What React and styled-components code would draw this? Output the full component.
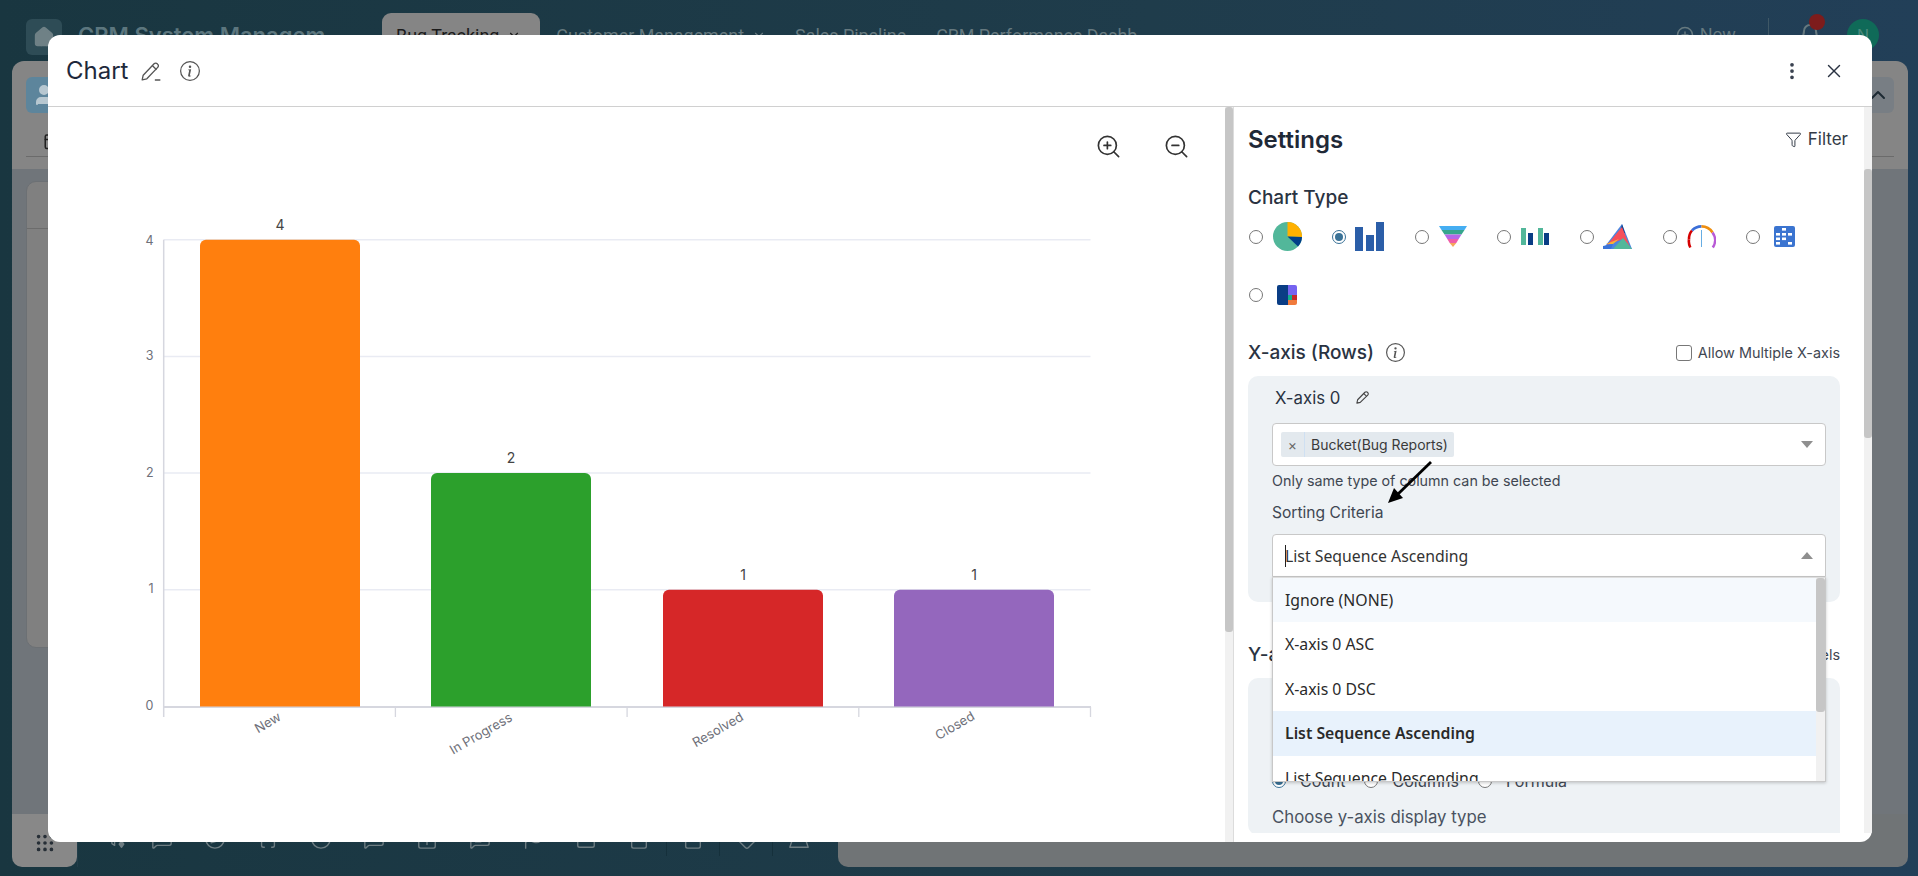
import React from "react";
import styled, { createGlobalStyle } from "styled-components";
import {
  ZoomIn, ZoomOut, Filter, X, Home, User, Calendar, ChevronUp, ChevronDown, CirclePlus, Bell, Grip,
  MessageSquare, Compass, Braces, Clock, MessageSquareDot, Calendar1, MessageSquareText, Flag, Rows2, ClipboardMinus, Tag, Mountain,
} from "lucide-react";
import { BsInfoCircle, BsThreeDotsVertical } from "react-icons/bs";

const Global = createGlobalStyle`
  html, body { margin: 0; padding: 0; height: 100%; background: #1c3a46; }
  * { box-sizing: border-box; }
  body { font-family: Inter, "Liberation Sans", sans-serif; }
`;

const Page = styled.div`
  position: relative;
  width: 1918px;
  height: 876px;
  overflow: hidden;
  display: flex;
  flex-direction: column;
  padding-bottom: 9px;
  background: linear-gradient(90deg, #193640 0%, #1f3c4b 60%, #223f58 100%);
`;

/* ---------- dimmed page behind the dialog ---------- */
const TopBar = styled.header`
  height: 61px;
  flex: none;
  display: flex;
  align-items: flex-start;
  padding: 13px 39px 0 26px;
  overflow: hidden;
`;
const HomeButton = styled.div`
  width: 36px;
  height: 36px;
  margin-top: 6px;
  flex: none;
  border-radius: 6px;
  background: #2e4c56;
  color: #6f8186;
  display: flex;
  align-items: center;
  justify-content: center;
`;
const AppTitle = styled.div`
  width: 320px;
  flex: none;
  padding: 8px 0 0 16px;
  font-size: 22px;
  font-weight: 600;
  line-height: 28px;
  color: #5c767e;
  white-space: nowrap;
  overflow: hidden;
`;
const Tab = styled.div`
  height: 44px;
  flex: none;
  display: flex;
  align-items: center;
  gap: 8px;
  padding: 0 ${(p) => (p.$active ? 19 : 14)}px 0 14px;
  margin-right: ${(p) => p.$gap || 0}px;
  border-radius: 9px;
  font-family: Roboto, sans-serif;
  font-size: 17.9px;
  color: ${(p) => (p.$active ? "#1b1b1b" : "#66797f")};
  background: ${(p) => (p.$active ? "#858585" : "transparent")};
  white-space: nowrap;
`;
const TopActions = styled.div`
  margin-left: auto;
  height: 44px;
  display: flex;
  align-items: center;
  color: #66797f;
  font-size: 17px;
`;
const NewButton = styled.div`
  display: flex;
  align-items: center;
  gap: 6px;
  padding-right: 32px;
`;
const BarDivider = styled.div`
  width: 1px;
  height: 34px;
  background: #3f5866;
  margin-right: 29px;
`;
const BellWrap = styled.div`
  position: relative;
  width: 24px;
  height: 24px;
  margin-right: 25px;
`;
const BellDot = styled.span`
  position: absolute;
  top: -9px;
  right: -3px;
  width: 16px;
  height: 16px;
  border-radius: 50%;
  background: #7d1c1c;
`;
const Avatar = styled.div`
  width: 32px;
  height: 32px;
  border-radius: 50%;
  background: #0f6a58;
  color: #4d8a7d;
  display: flex;
  align-items: center;
  justify-content: center;
  font-size: 16px;
`;
const Panel = styled.main`
  flex: 1;
  margin: 0 10px 0 12px;
  display: flex;
  flex-direction: column;
  min-height: 0;
`;
const PanelHead = styled.div`
  height: 108px;
  flex: none;
  padding: 16px 14px 0;
  background: #858585;
  border-radius: 12px 12px 0 0;
`;
const HeadRow = styled.div`
  height: 36px;
  display: flex;
  justify-content: space-between;
`;
const AppBadge = styled.div`
  width: 50px;
  height: 36px;
  border-radius: 6px;
  background: #5d859c;
  color: #b7c7d0;
  display: flex;
  align-items: center;
  padding-left: 6px;
`;
const CollapseButton = styled.div`
  width: 60px;
  height: 36px;
  border-radius: 6px;
  background: #787e84;
  color: #1d2a33;
  display: flex;
  align-items: center;
  justify-content: flex-end;
  padding-right: 4px;
`;
const ToolRow = styled.div`
  height: 32px;
  margin-top: 12px;
  padding-left: 17px;
  border-bottom: 1px solid #6b6b6b;
  color: #202020;
  display: flex;
  align-items: center;
`;
const PanelBody = styled.div`
  flex: 1;
  background: #70757a;
  padding: 12px 14px;
`;
const DimCard = styled.div`
  width: 1000px;
  height: 467px;
  background: #808080;
  border: 1px solid #6c7074;
  border-radius: 10px;
`;
const DimCardHead = styled.div`
  height: 47px;
  border-bottom: 1px solid #6c6c6c;
`;
const Dock = styled.div`
  height: 53px;
  flex: none;
  margin: 0 10px 0 12px;
  display: flex;
  align-items: stretch;
`;
const DockGrid = styled.div`
  width: 65px;
  flex: none;
  background: #888888;
  border-radius: 0 0 10px 10px;
  color: #262e36;
  display: flex;
  align-items: center;
  justify-content: center;
  padding-top: 5px;
`;
const DockStrip = styled.div`
  width: 761px;
  flex: none;
  display: flex;
  align-items: flex-start;
  padding: 8px 0 0 18.5px;
  border-left: 1px solid #223d49;
`;
const DockCell = styled.div`
  width: ${(p) => p.$w || 53}px;
  height: 34px;
  flex: none;
  color: #6e7d82;
  display: flex;
  align-items: center;
  justify-content: center;
  border-left: ${(p) => (p.$divider ? "1px solid #15303b" : "none")};
`;
const DockFill = styled.div`
  flex: 1;
  background: #707476;
  border-radius: 0 0 10px 10px;
`;

/* ---------- dialog ---------- */
const Modal = styled.section`
  position: absolute;
  left: 48px;
  top: 35px;
  width: 1824px;
  height: 807px;
  background: #fff;
  border-radius: 12px;
  overflow: hidden;
  display: flex;
  flex-direction: column;
`;
const ModalHeader = styled.div`
  height: 72px;
  flex: none;
  display: flex;
  align-items: center;
  padding: 0 27px 0 18px;
  border-bottom: 1.5px solid #d0d0d0;
`;
const ModalTitle = styled.h1`
  margin: 0 12px 0 0;
  font-size: 24px;
  font-weight: 400;
  color: #1e293b;
`;
const IconButton = styled.span`
  display: inline-flex;
  align-items: center;
  justify-content: center;
  color: ${(p) => p.$color || "#555"};
  margin-left: ${(p) => p.$ml || 0}px;
`;
const HeaderEnd = styled.div`
  margin-left: auto;
  display: flex;
  align-items: center;
  gap: 21px;
`;
const ModalBody = styled.div`
  flex: 1;
  display: flex;
  min-height: 0;
`;
const ChartColumn = styled.div`
  flex: 1;
  min-width: 0;
  display: flex;
  flex-direction: column;
`;
const ChartTools = styled.div`
  height: 78px;
  flex: none;
  display: flex;
  justify-content: flex-end;
  gap: 41px;
  padding: 25.5px 34.5px 0 0;
  color: #333;
`;
const ChartSvg = styled.svg`
  display: block;
  width: 1177px;
  height: 657px;
`;
const ScrollTrack = styled.div`
  width: ${(p) => p.$w || 8}px;
  flex: none;
  height: ${(p) => p.$h || "100%"};
  background: #f1f1f1;
  padding-top: ${(p) => p.$top || 0}px;
`;
const ScrollThumb = styled.div`
  height: ${(p) => p.$h}px;
  background: #c6c6c6;
  border-radius: 3px;
`;
const SplitEdge = styled.div`
  width: 1px;
  flex: none;
  background: #dcdcdc;
`;
const Settings = styled.div`
  position: relative;
  width: 630px;
  height: 726px;
  flex: none;
  padding: 0 24px 0 14px;
  overflow: hidden;
`;
const SettingsHead = styled.div`
  height: 64px;
  display: flex;
  align-items: center;
  justify-content: space-between;
`;
const SettingsTitle = styled.h2`
  margin: 0;
  font-size: 24px;
  font-weight: 600;
  color: #1f2937;
`;
const FilterLink = styled.div`
  display: flex;
  align-items: center;
  gap: 6px;
  margin-right: -8px;
  font-size: 17px;
  color: #333b47;
`;
const SectionTitle = styled.h3`
  margin: ${(p) => p.$mt || 0}px 0 0;
  height: 26px;
  line-height: 26px;
  font-size: 19px;
  font-weight: 500;
  color: #2a3342;
  display: flex;
  align-items: center;
  gap: 12px;
  white-space: nowrap;
`;
const TypeGrid = styled.div`
  display: flex;
  flex-wrap: wrap;
  margin-top: -3.5px;
`;
const TypeItem = styled.div`
  width: 82.8px;
  height: 58px;
  display: flex;
  align-items: center;
  gap: ${(p) => p.$gap}px;
  padding-left: 1px;
`;
const Radio = styled.span`
  width: 14px;
  height: 14px;
  flex: none;
  border-radius: 50%;
  border: 1.5px solid ${(p) => (p.$on ? "#3a7297" : "#777")};
  background: #fff;
  display: inline-flex;
  align-items: center;
  justify-content: center;
  &::after {
    content: "";
    width: 8px;
    height: 8px;
    border-radius: 50%;
    background: ${(p) => (p.$on ? "#3a7297" : "transparent")};
  }
`;
const SectionRow = styled.div`
  height: 26px;
  margin-top: ${(p) => p.$mt || 0}px;
  display: flex;
  align-items: center;
  justify-content: space-between;
`;
const CheckLabel = styled.label`
  display: flex;
  align-items: center;
  gap: 6px;
  font-size: 14.4px;
  color: #3f4752;
  white-space: nowrap;
`;
const CheckBox = styled.span`
  width: 16px;
  height: 16px;
  border: 1.5px solid #777;
  border-radius: 3px;
  background: #fff;
`;
const GrayCard = styled.div`
  margin-top: 10px;
  padding: ${(p) => p.$pt || 10}px 14px ${(p) => p.$pb || 25}px 24px;
  background: #eef2f5;
  border-radius: ${(p) => p.$radius || "10px"};
`;
const AxisLabel = styled.div`
  height: 24px;
  padding-left: 3px;
  display: flex;
  align-items: center;
  gap: 15px;
  font-size: 16.8px;
  color: #2a3342;
`;
const SelectBox = styled.div`
  height: 43px;
  margin-top: ${(p) => p.$mt || 0}px;
  padding: 0 12px 0 ${(p) => p.$pl || 8}px;
  display: flex;
  align-items: center;
  justify-content: space-between;
  background: #fff;
  border: 1px solid #c8c8c8;
  border-radius: ${(p) => (p.$open ? "4px 4px 0 0" : "4px")};
`;
const Chip = styled.div`
  height: 25px;
  display: flex;
  align-items: center;
  background: #e3e9ee;
  border-radius: 2px;
  font-size: 14px;
  color: #3a3a3a;
`;
const ChipClose = styled.span`
  width: 24px;
  height: 100%;
  display: flex;
  align-items: center;
  justify-content: center;
  color: #666;
  font-size: 14px;
  border-right: 1px solid #cfe0f2;
`;
const ChipText = styled.span`
  padding: 0 6px;
`;
const Caret = styled.span`
  width: 0;
  height: 0;
  margin-right: 0;
  border-left: 6px solid transparent;
  border-right: 6px solid transparent;
  border-top: ${(p) => (p.$up ? "none" : "7px solid #8f8f8f")};
  border-bottom: ${(p) => (p.$up ? "7px solid #8f8f8f" : "none")};
`;
const HelpText = styled.div`
  margin-top: 6px;
  height: 18px;
  line-height: 18px;
  font-size: 14.3px;
  color: #3f4752;
`;
const FieldLabel = styled.div`
  margin-top: ${(p) => p.$mt || 0}px;
  height: 24px;
  line-height: 24px;
  font-size: ${(p) => p.$size || 16}px;
  color: ${(p) => p.$color || "#3f4752"};
`;
const SelectWrap = styled.div`
  position: relative;
  margin-top: 9px;
`;
const SelectValue = styled.span`
  display: flex;
  align-items: center;
  padding-top: 1px;
  font-family: "Noto Sans", sans-serif;
  font-size: 15.8px;
  color: #333;
`;
const TextCursor = styled.i`
  width: 1px;
  height: 22px;
  margin-right: -1px;
  background: #222;
`;
const Dropdown = styled.div`
  position: absolute;
  z-index: 5;
  left: 0;
  right: 0;
  top: 100%;
  height: 205px;
  display: flex;
  overflow: hidden;
  background: #fff;
  border: 1px solid #c8c8c8;
  border-top: 1px solid #dedede;
  box-shadow: 0 1px 3px rgba(0, 0, 0, 0.2);
`;
const OptionList = styled.ul`
  flex: 1;
  margin: 0;
  padding: 0;
  list-style: none;
  overflow: hidden;
`;
const Option = styled.li`
  height: 44.5px;
  display: flex;
  align-items: center;
  padding-left: 12px;
  font-family: "Noto Sans", sans-serif;
  font-size: 15.8px;
  font-weight: ${(p) => (p.$selected ? 600 : 400)};
  color: #2a2a2a;
  background: ${(p) => (p.$selected ? "#e8f2fc" : p.$hover ? "#f5f9fd" : "#fff")};
`;
const RadioRow = styled.div`
  margin-top: 57px;
  height: 24px;
  display: flex;
  align-items: center;
  font-size: 16px;
  color: #3f4752;
`;
const RadioOption = styled.span`
  display: flex;
  align-items: center;
  gap: 14px;
  margin-right: 19px;
`;
const ArrowMark = styled.svg`
  position: absolute;
  left: 1332px;
  top: 420px;
`;

const PencilLine = ({ size = 22 }) => (
  <svg width={size} height={size} viewBox="0 0 20 20" fill="none" stroke="#555" strokeWidth="1.2" strokeLinejoin="round">
    <path d="M2 18l.9-4.2L12.8 3.4a2 2 0 0 1 2.9 0l.4.4a2 2 0 0 1 0 2.9L6.2 17.1 2 18z" />
    <path d="M11.2 5l3.8 3.8" />
    <path d="M13.5 18.2h5" strokeWidth="1.4" />
  </svg>
);
const Pencil = () => (
  <svg width="15" height="15" viewBox="0 0 16 16" fill="none" stroke="#444" strokeWidth="1.2" strokeLinejoin="round">
    <path d="M2 14l.8-3.6L10.6 2.4a1.8 1.8 0 0 1 2.6 0l.4.4a1.8 1.8 0 0 1 0 2.6L5.6 13.2 2 14z" />
    <path d="M9.4 3.8l2.8 2.8" />
  </svg>
);
const FilterSpark = ({ size = 22, strokeWidth = 1.5 }) => (
  <svg width={size} height={size} viewBox="0 0 24 24" fill="none" stroke="currentColor" strokeWidth={strokeWidth} strokeLinecap="round" strokeLinejoin="round">
    <path d="M2 4h14l-5.5 7v8l-3-2v-6z" />
    <path d="M18 14l2.5 3.5L18 21l-2.5-3.5z" fill="currentColor" />
  </svg>
);

const IconBox = styled.svg`
  flex: none;
  display: block;
`;
const PieIcon = () => (
  <IconBox width="29" height="29" viewBox="0 0 29 29">
    <circle cx="14.5" cy="14.5" r="14.5" fill="#52b79a" />
    <path d="M14.5 14.5V0A14.5 14.5 0 0 1 29 15z" fill="#ffb000" />
    <path d="M14.5 14.5L29 15a14.5 14.5 0 0 1-4 9.5z" fill="#003f88" />
  </IconBox>
);
const BarsIcon = () => (
  <IconBox width="29" height="29" viewBox="0 0 29 29" fill="#2b5ea8">
    <rect x="0" y="5" width="8" height="24" />
    <rect x="11" y="13" width="8" height="16" />
    <rect x="21" y="0" width="8" height="29" />
  </IconBox>
);
const FunnelIcon = () => (
  <IconBox width="28" height="21" viewBox="0 0 28 21">
    <path d="M0 0h28l-2.5 4H2.5z" fill="#45aef2" />
    <path d="M2.5 4h23l-3 4.5h-17z" fill="#36a58d" />
    <path d="M5.5 8.5h17l-2.8 4.5H8.3z" fill="#b566e8" />
    <path d="M8.3 13h11.4l-2.4 4h-6.6z" fill="#ef5da8" />
    <path d="M10.7 17h6.6L14 21z" fill="#f5a65b" />
  </IconBox>
);
const GroupedIcon = () => (
  <IconBox width="28" height="17" viewBox="0 0 28 17">
    <rect x="0" y="0" width="5" height="17" fill="#52b79a" />
    <rect x="7" y="5" width="5" height="12" fill="#0a3d85" />
    <rect x="17" y="0" width="5" height="17" fill="#52b79a" />
    <rect x="23" y="5" width="5" height="12" fill="#0a3d85" />
  </IconBox>
);
const AreaIcon = () => (
  <IconBox width="29" height="25" viewBox="0 0 29 25">
    <path d="M19 0L0 25h29z" fill="#4a86e0" />
    <path d="M19 0l-2 10 5-1z" fill="#0a3d85" />
    <path d="M19 3l8 20-7-8-16 6z" fill="#f64f59" />
    <path d="M3 20l13-5-6 5z" fill="#f8b133" />
    <path d="M0 22l10-2-2 5H0z" fill="#3b74d8" />
    <path d="M10 25l10-11 9 11z" fill="#52b79a" />
  </IconBox>
);
const GaugeIcon = () => (
  <IconBox width="29" height="24" viewBox="0 0 29 24" fill="none" strokeWidth="2.6">
    <path d="M3.3 22.5A13 13 0 0 1 2 14.5" stroke="#d50000" />
    <path d="M2 14.5A12.6 12.6 0 0 1 5 5.5" stroke="#d50000" />
    <path d="M5 5.5A13 13 0 0 1 14.5 1.4" stroke="#3b6fd8" />
    <path d="M14.5 1.4A13 13 0 0 1 25.5 7.5" stroke="#ef8f10" />
    <path d="M25.5 7.5A13 13 0 0 1 25.8 22.5" stroke="#b85ad6" />
    <path d="M14.5 5v17" stroke="#3f98dc" strokeWidth="0.8" />
  </IconBox>
);
const HeatIcon = () => (
  <IconBox width="21" height="21" viewBox="0 0 21 21">
    <rect width="21" height="21" rx="2" fill="#3b74d0" />
    <g fill="#fff">
      <rect x="8" y="2" width="4" height="2.6" />
      <rect x="2" y="7" width="4" height="2.6" />
      <rect x="8" y="7" width="4" height="2.6" />
      <rect x="14" y="7" width="4" height="2.6" />
      <rect x="2" y="11.5" width="4" height="2.6" />
      <rect x="8" y="11.5" width="4" height="2.6" />
      <rect x="2" y="16" width="4" height="2.6" />
      <rect x="14" y="16" width="4" height="2.6" />
    </g>
  </IconBox>
);
const TreeIcon = () => (
  <IconBox width="20" height="20" viewBox="0 0 20 20">
    <path d="M2 0h9v20H2a2 2 0 0 1-2-2V2a2 2 0 0 1 2-2z" fill="#0a3d85" />
    <path d="M11 0h7a2 2 0 0 1 2 2v8h-9z" fill="#7563f0" />
    <rect x="11" y="10" width="4" height="5" fill="#12b08c" />
    <rect x="15" y="10" width="5" height="5" fill="#c52828" />
    <path d="M11 15h9v3a2 2 0 0 1-2 2h-7z" fill="#f07a3c" />
  </IconBox>
);

const chartTypes = [
  { Icon: PieIcon, gap: 10 },
  { Icon: BarsIcon, gap: 9 },
  { Icon: FunnelIcon, gap: 10 },
  { Icon: GroupedIcon, gap: 10 },
  { Icon: AreaIcon, gap: 9 },
  { Icon: GaugeIcon, gap: 10 },
  { Icon: HeatIcon, gap: 14 },
  { Icon: TreeIcon, gap: 14 },
];

const ticks = [163.7, 395.4, 627.1, 858.8, 1090.5];
const rows = [
  { v: 4, name: "New", color: "#ff7f0e", x: 200, lx: 268, ly: 723 },
  { v: 2, name: "In Progress", color: "#2ca02c", x: 431, lx: 481, ly: 734 },
  { v: 1, name: "Resolved", color: "#d62728", x: 663, lx: 718, ly: 730 },
  { v: 1, name: "Closed", color: "#9467bd", x: 894, lx: 955, ly: 726 },
];
const zeroY = 706.5;
const unit = 116.7;

const Chart = () => (
  <ChartSvg viewBox="48 185 1177 657" role="img" fontFamily="Inter, sans-serif">
    {[1, 2, 3, 4].map((n) => (
      <line key={n} x1="163.7" x2="1090.5" y1={zeroY - n * unit} y2={zeroY - n * unit} stroke="#e9ebf3" strokeWidth="1.5" />
    ))}
    <line x1="163.7" x2="163.7" y1={zeroY - 4 * unit} y2="717" stroke="#d6d7df" strokeWidth="1.5" />
    <line x1="163" x2="1091" y1="707" y2="707" stroke="#d6d7df" strokeWidth="1.8" />
    {ticks.slice(1).map((t) => (
      <line key={t} x1={t} x2={t} y1="707" y2="717" stroke="#d6d7df" strokeWidth="1.3" />
    ))}
    {[0, 1, 2, 3, 4].map((n) => (
      <text key={n} x="153.5" y={zeroY - n * unit + (n === 4 ? 5 : 3.5)} textAnchor="end" fontSize="12.5" fill="#6e7079">{n}</text>
    ))}
    {rows.map((r) => {
      const top = zeroY - r.v * unit;
      return (
        <g key={r.name}>
          <path d={`M${r.x} ${zeroY}V${top + 6}a6 6 0 0 1 6 -6H${r.x + 154}a6 6 0 0 1 6 6V${zeroY}z`} fill={r.color} />
          <text x={r.x + 80} y={top - 10} textAnchor="middle" fontSize="14" fill="#444">{r.v}</text>
          <text x={r.lx} y={r.ly + 4} textAnchor="middle" fontSize="13" fill="#6e7079" transform={`rotate(-30 ${r.lx} ${r.ly})`}>{r.name}</text>
        </g>
      );
    })}
  </ChartSvg>
);

const dockIcons = [
  { I: FilterSpark, w: 39 },
  { I: MessageSquare },
  { I: Compass },
  { I: Braces },
  { I: Clock },
  { I: MessageSquareDot },
  { I: Calendar1 },
  { I: MessageSquareText },
  { I: Flag },
  { I: Rows2 },
  { I: ClipboardMinus },
  { I: ClipboardMinus, divider: true },
  { I: Tag, divider: true },
  { I: Mountain, divider: true },
];

export default function App() {
  return (
    <>
      <Global />
      <Page>
        <TopBar>
          <HomeButton><Home size={22} fill="#6f8186" /></HomeButton>
          <AppTitle>CRM System Managem</AppTitle>
          <Tab $active $gap={2}>Bug Tracking <ChevronDown size={14} /></Tab>
          <Tab $gap={1}>Customer Management <ChevronDown size={14} /></Tab>
          <Tab $gap={2}>Sales Pipeline</Tab>
          <Tab>CRM Performance Dashb</Tab>
          <TopActions>
            <NewButton><CirclePlus size={18} /> New</NewButton>
            <BarDivider />
            <BellWrap><Bell size={24} /><BellDot /></BellWrap>
            <Avatar>N</Avatar>
          </TopActions>
        </TopBar>
        <Panel>
          <PanelHead>
            <HeadRow>
              <AppBadge><User size={24} fill="#b7c7d0" /></AppBadge>
              <CollapseButton><ChevronUp size={24} /></CollapseButton>
            </HeadRow>
            <ToolRow><Calendar size={18} /></ToolRow>
          </PanelHead>
          <PanelBody>
            <DimCard><DimCardHead /></DimCard>
          </PanelBody>
        </Panel>
        <Dock>
          <DockGrid><Grip size={22} /></DockGrid>
          <DockStrip>
            {dockIcons.map(({ I, w, divider }, i) => (
              <DockCell key={i} $w={w} $divider={divider}><I size={22} strokeWidth={1.5} /></DockCell>
            ))}
          </DockStrip>
          <DockFill />
        </Dock>

        <Modal>
          <ModalHeader>
            <ModalTitle>Chart</ModalTitle>
            <IconButton><PencilLine /></IconButton>
            <IconButton $ml={18} $color="#555"><BsInfoCircle size={20} /></IconButton>
            <HeaderEnd>
              <IconButton $color="#3a4250"><BsThreeDotsVertical size={20} /></IconButton>
              <IconButton $color="#2a3342"><X size={22} strokeWidth={1.5} /></IconButton>
            </HeaderEnd>
          </ModalHeader>
          <ModalBody>
            <ChartColumn>
              <ChartTools>
                <ZoomIn size={27} strokeWidth={1.5} />
                <ZoomOut size={27} strokeWidth={1.5} />
              </ChartTools>
              <Chart />
            </ChartColumn>
            <ScrollTrack $w={8.5}><ScrollThumb $h={525} /></ScrollTrack>
            <SplitEdge />
            <Settings>
              <SettingsHead>
                <SettingsTitle>Settings</SettingsTitle>
                <FilterLink><Filter size={17} strokeWidth={1.4} /> Filter</FilterLink>
              </SettingsHead>
              <SectionTitle $mt={14}>Chart Type</SectionTitle>
              <TypeGrid>
                {chartTypes.map(({ Icon, gap }, i) => (
                  <TypeItem key={i} $gap={gap}>
                    <Radio $on={i === 1} />
                    <Icon />
                  </TypeItem>
                ))}
              </TypeGrid>
              <SectionRow $mt={16}>
                <SectionTitle>X-axis (Rows) <IconButton $color="#555"><BsInfoCircle size={19} /></IconButton></SectionTitle>
                <CheckLabel><CheckBox /> Allow Multiple X-axis</CheckLabel>
              </SectionRow>
              <GrayCard>
                <AxisLabel>X-axis 0 <Pencil /></AxisLabel>
                <SelectBox $mt={13} $pl={8}>
                  <Chip>
                    <ChipClose>×</ChipClose>
                    <ChipText>Bucket(Bug Reports)</ChipText>
                  </Chip>
                  <Caret />
                </SelectBox>
                <HelpText>Only same type of column can be selected</HelpText>
                <FieldLabel $mt={11} $size={15.6}>Sorting Criteria</FieldLabel>
                <SelectWrap>
                  <SelectBox $pl={12} $open>
                    <SelectValue><TextCursor />List Sequence Ascending</SelectValue>
                    <Caret $up />
                  </SelectBox>
                  <Dropdown>
                    <OptionList>
                      <Option $hover>Ignore (NONE)</Option>
                      <Option>X-axis 0 ASC</Option>
                      <Option>X-axis 0 DSC</Option>
                      <Option $selected>List Sequence Ascending</Option>
                      <Option>List Sequence Descending</Option>
                    </OptionList>
                    <ScrollTrack $w={9}><ScrollThumb $h={134} /></ScrollTrack>
                  </Dropdown>
                </SelectWrap>
              </GrayCard>
              <SectionRow $mt={40}>
                <SectionTitle>Y-axis (Columns)</SectionTitle>
                <CheckLabel><CheckBox /> Allow Multiple Labels</CheckLabel>
              </SectionRow>
              <GrayCard $pt={10} $pb={6} $radius="10px 10px 0 10px">
                <AxisLabel>Y-axis 0 <Pencil /></AxisLabel>
                <RadioRow>
                  <RadioOption><Radio $on /> Count</RadioOption>
                  <RadioOption><Radio /> Columns</RadioOption>
                  <RadioOption><Radio /> Formula</RadioOption>
                </RadioRow>
                <FieldLabel $mt={12} $size={16.8} $color="#4a5260">Choose y-axis display type</FieldLabel>
              </GrayCard>
            </Settings>
            <ScrollTrack $w={8} $h="726px" $top={62}><ScrollThumb $h={269} /></ScrollTrack>
          </ModalBody>
          <ArrowMark width="60" height="55" viewBox="0 0 60 55">
            <path d="M51 7L17 40" stroke="#000" strokeWidth="2.8" />
            <path d="M8 48l6-15 9 10z" fill="#000" />
          </ArrowMark>
        </Modal>
      </Page>
    </>
  );
}
